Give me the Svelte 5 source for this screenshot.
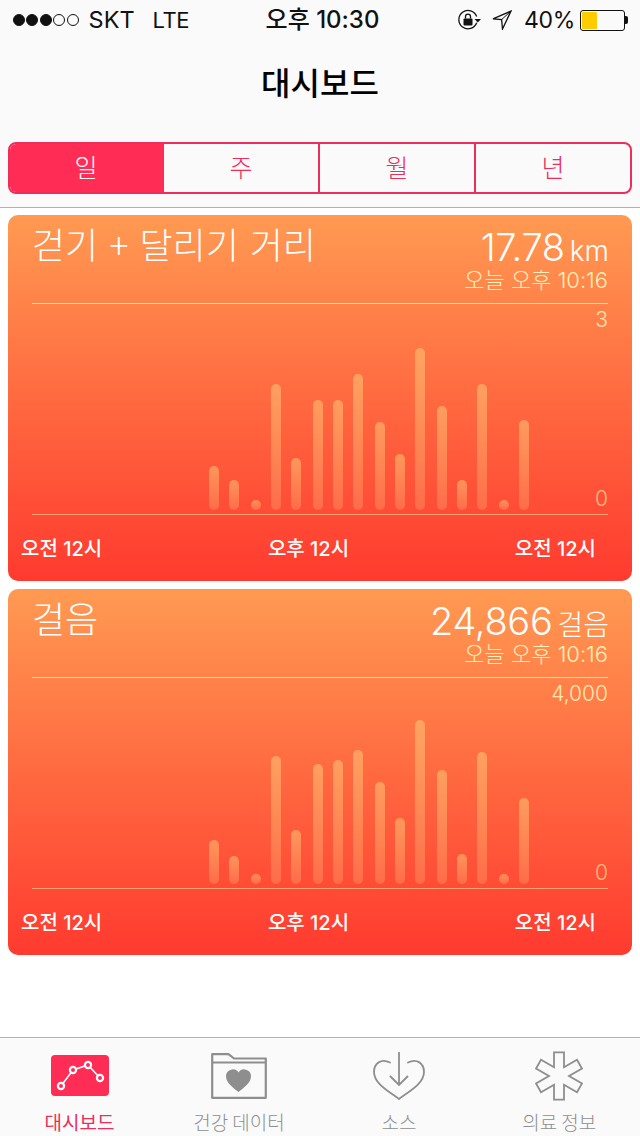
<script>
  const xs = [209, 229, 251, 271, 291, 313, 333, 353, 375, 395, 415, 437, 457, 477, 499, 519];
  const tops1 = [466, 480, 500, 384, 458, 400, 400, 374, 422, 454, 348, 406, 480, 384, 500, 420];
  const tops2 = [840, 856, 874, 756, 830, 764, 760, 750, 782, 818, 720, 770, 854, 752, 874, 798];
  const mk = (tops, b) => tops.map((t, i) => ({ h: b - t, gap: i === 0 ? xs[0] - 32 : xs[i] - xs[i - 1] - 10 }));
  const cards = [
    { title: '걷기 + 달리기 거리', value: '17.78', unit: 'km', max: '3', bars: mk(tops1, 510) },
    { title: '걸음', value: '24,866', unit: '걸음', max: '4,000', bars: mk(tops2, 884) }
  ];
  const segs = ['일', '주', '월', '년'];
</script>

<div class="phone">
  <header class="top">
    <div class="status">
      <div class="s-left">
        <span class="dots"><i class="on"></i><i class="on"></i><i class="on"></i><i></i><i></i></span>
        <span class="carrier">SKT</span>
        <span class="lte">LTE</span>
      </div>
      <div class="s-time">오후 10:30</div>
      <div class="s-right">
        <svg class="lock" width="23" height="22" viewBox="0 0 23 22">
          <path d="M18.700 13.800A9.200 9.200 0 1 1 18.700 7.500" fill="none" stroke="#111" stroke-width="1.300"/>
          <path d="M16.500 10h6.500l-3.200 3.400z" fill="#111"/>
          <rect x="5.500" y="9.500" width="9" height="7" rx="1" fill="#111"/>
          <path d="M7.500 9.500V7.600a2.500 2.500 0 0 1 5 0v1.900" fill="none" stroke="#111" stroke-width="1.300"/>
        </svg>
        <svg class="loc" width="20" height="20" viewBox="0 0 20 20">
          <path d="M19 1 1 8.800l8.600.8.900 9.400z" fill="none" stroke="#111" stroke-width="1.300"/>
          <path d="M19 1 9.600 9.600" stroke="#111" stroke-width="1"/>
        </svg>
        <span class="pct">40%</span>
        <span class="batt"><span class="fill"></span></span><span class="nub"></span>
      </div>
    </div>
    <h1>대시보드</h1>
    <div class="segs">
      {#each segs as s, i}
        <div class="seg" class:active={i === 0}>{s}</div>
      {/each}
    </div>
  </header>

  <main>
    {#each cards as c}
      <section class="card">
        <div class="head">
          <div class="title">{c.title}</div>
          <div class="meta">
            <div class="val"><span class="num">{c.value}</span><span class="unit">{c.unit}</span></div>
            <div class="when">오늘 오후 10:16</div>
          </div>
        </div>
        <div class="chart">
          <div class="max">{c.max}</div>
          <div class="bars">
            {#each c.bars as b}
              <span class="bar" style="height:{b.h}px;margin-left:{b.gap}px"></span>
            {/each}
          </div>
          <div class="zero">0</div>
        </div>
        <div class="axis">
          <span>오전 12시</span><span>오후 12시</span><span>오전 12시</span>
        </div>
      </section>
    {/each}
  </main>

  <nav class="tabs">
    <div class="tab active">
      <svg width="58" height="52" viewBox="0 -5 58 52">
        <rect width="58" height="41" rx="4" fill="#ff2d55"/>
        <path d="M10 31 22 15l15-5 12 13" fill="none" stroke="#fff" stroke-width="1.600"/>
        <g fill="#ff2d55" stroke="#fff" stroke-width="2.200">
          <circle cx="10" cy="31" r="3.100"/><circle cx="22" cy="15" r="3.100"/><circle cx="37" cy="10" r="3.100"/><circle cx="49" cy="23" r="3.100"/>
        </g>
      </svg>
      <span>대시보드</span>
    </div>
    <div class="tab">
      <svg width="56" height="52" viewBox="0 -3 56 52">
        <path d="M1.200 44.800V1.200h16.300l5.500 4.300h31.800v39.300z M1.200 9.500h53.600" fill="none" stroke="#8e8e8e" stroke-width="2.200" stroke-linejoin="round"/>
        <path d="M27.500 39C21.500 34 15 30 15 23a6.800 6.800 0 0 1 12.500-3.500A6.800 6.800 0 0 1 40 23c0 7-6.500 11-12.500 16z" fill="#8e8e8e"/>
      </svg>
      <span>건강 데이터</span>
    </div>
    <div class="tab">
      <svg width="54" height="52" viewBox="0 0 54 52">
        <path d="M18 12.500C9 8 2 13.500 2 22c0 12 16 20 25 27 9-7 25-15 25-27 0-8.500-7-14-16-9.500" fill="none" stroke="#8e8e8e" stroke-width="1.800" stroke-linecap="round"/>
        <path d="M27 2v32M18 26l9 9 9-9" fill="none" stroke="#8e8e8e" stroke-width="1.800"/>
      </svg>
      <span>소스</span>
    </div>
    <div class="tab">
      <svg width="48" height="52" viewBox="-1 -1.500 48 52">
        <path d="M18 .9h10v14.900l13-7.500 5 8.700-13 7.500 13 7.500-5 8.700-13-7.500v14.900H18V33.200L5 40.700 0 32l13-7.500L0 17l5-8.700 13 7.500z" fill="none" stroke="#8e8e8e" stroke-width="1.800"/>
      </svg>
      <span>의료 정보</span>
    </div>
  </nav>
</div>

<style>
  :global(body) { margin: 0; background: #fff; }
  .phone {
    width: 640px; height: 1136px; display: flex; flex-direction: column;
    font-family: "Noto Sans CJK KR", "Inter", sans-serif; overflow: hidden;
  }
  .top { height: 207px; background: #fafafa; border-bottom: 1px solid #b2b2b2; box-sizing: content-box; }
  .status {
    height: 40px; display: flex; align-items: center; justify-content: space-between;
    padding: 0 12px 0 13px; position: relative; color: #111;
    font: 400 24px/40px "Inter", "Noto Sans CJK KR", sans-serif;
  }
  .s-left { display: flex; align-items: center; }
  .dots { display: flex; gap: 1.400px; margin-right: 10px; }
  .dots i { width: 12px; height: 12px; border-radius: 50%; border: 1px solid #111; box-sizing: border-box; }
  .dots i.on { background: #111; }
  .carrier { font-size: 23.500px; }
  .lte { margin-left: 18px; font-size: 22px; letter-spacing: -0.500px; }
  .s-time {
    position: absolute; left: 5px; right: 0; text-align: center; font-weight: 500; font-size: 24px;
    font-family: "Inter", "Noto Sans CJK KR", sans-serif;
  }
  .s-right { display: flex; align-items: center; position: relative; }
  .lock { margin-right: 11px; }
  .loc { margin-right: 12px; }
  .pct { font-size: 23px; margin-right: 5px; letter-spacing: -0.300px; }
  .batt { width: 41px; height: 17px; border: 1px solid #111; border-radius: 3px; padding: 1px; display: block; box-sizing: content-box; }
  .fill { display: block; width: 15px; height: 17px; background: #ffcc00; border-radius: 1px; }
  .nub { width: 3px; height: 8px; background: #111; border-radius: 0 2px 2px 0; }
  h1 {
    margin: 0; height: 102px; box-sizing: border-box; text-align: center;
    font-size: 32px; font-weight: 500; line-height: 82px; color: #000;
  }
  .segs {
    margin: 0 8px; height: 52px; display: grid; grid-template-columns: 154px 156px 156px 154px;
    border: 2px solid #ed2e5b; border-radius: 8px; overflow: hidden; box-sizing: border-box; background: #fafafa;
  }
  .seg {
    color: #ed2e5b; font-size: 25px; line-height: 44px; text-align: center; font-weight: 300;
    border-right: 2px solid #ed2e5b;
  }
  .seg:last-child { border-right: 0; }
  .seg.active { background: #ff2d55; color: #fff; border-right: 0; padding-right: 2px; }
  main { flex: 1; padding: 7px 8px 0; display: flex; flex-direction: column; gap: 8px; background: #fff; }
  .card {
    height: 366px; border-radius: 10px; box-sizing: border-box; padding: 0 24px; color: #fff;
    background: linear-gradient(#ff9a52, #ff3a2f); display: flex; flex-direction: column;
  }
  .head { height: 88px; display: flex; justify-content: space-between; border-bottom: 1px solid rgba(255, 240, 170, .85); flex: none; }
  .title { font-size: 36px; font-weight: 300; line-height: 56px; word-spacing: 3px; }
  .meta { text-align: right; }
  .val { height: 47px; display: flex; justify-content: flex-end; align-items: baseline; gap: 5px; margin-right: -1px; }
  .num { font: 300 38px/64px "Inter", sans-serif; letter-spacing: -0.300px; }
  .unit { font: 300 28px/64px "Inter", "Noto Sans CJK KR", sans-serif; }
  .when { font: 300 22px/36px "Inter", "Noto Sans CJK KR", sans-serif; color: #fff0bd; }
  .chart { height: 210px; position: relative; border-bottom: 1px solid rgba(255, 220, 160, .6); flex: none; display: flex; align-items: flex-end; }
  .max, .zero { position: absolute; right: 0; font: 300 21px/24px "Inter", sans-serif; color: #ffe9b0; }
  .max { top: 4px; }
  .zero { bottom: 3px; color: rgba(255, 226, 159, .75); }
  .bars { display: flex; align-items: flex-end; height: 206px; padding-bottom: 4px; box-sizing: border-box; }
  .bar {
    display: block; flex: none; width: 10px; min-height: 10px; border-radius: 5px;
    background: linear-gradient(rgba(255, 200, 120, .55), rgba(255, 200, 130, .25));
  }
  .axis {
    margin: 0 -11px; display: flex; justify-content: space-between; padding-right: 23px;
    font: 500 20px/69px "Inter", "Noto Sans CJK KR", sans-serif;
  }
  .tabs {
    height: 99px; box-sizing: border-box; border-top: 1px solid #b2b2b2; background: #fafafa;
    display: grid; grid-template-columns: 159px 160px 160px 160.500px;
  }
  .tab { display: flex; flex-direction: column; align-items: center; color: #8e8e8e; padding-top: 12px; position: relative; }
  .tab svg { flex: none; }
  .tab span { font-size: 19px; line-height: 28px; font-weight: 300; margin-top: 6px; }
  .tab.active { color: #ed2e5b; }
  .tab.active span { font-weight: 400; }
</style>
